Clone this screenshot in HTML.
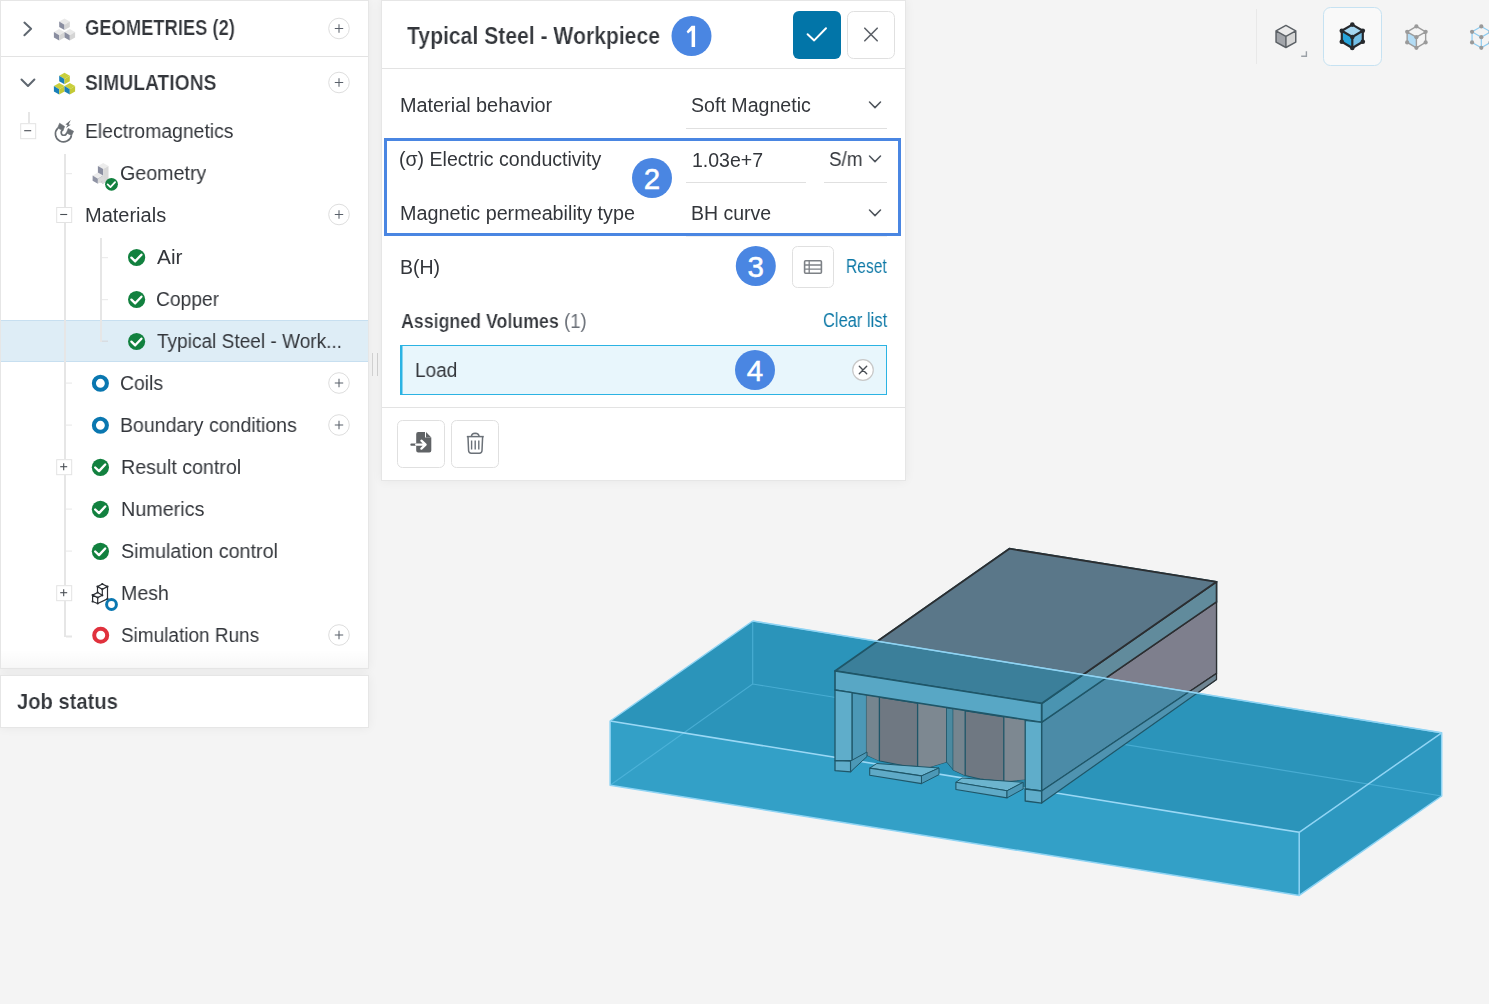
<!DOCTYPE html>
<html><head><meta charset="utf-8"><style>
*{margin:0;padding:0;box-sizing:border-box}
html,body{width:1489px;height:1004px;overflow:hidden;background:#f4f4f4;font-family:"Liberation Sans", sans-serif}
.a{position:absolute}
.t{position:absolute;white-space:nowrap;line-height:1;transform-origin:0 0;will-change:transform}
</style></head>
<body>
<div class="a" style="left:0;top:0;width:369px;height:669px;background:#fff;border:1px solid #e6e6e6;box-shadow:0 0 10px rgba(0,0,0,0.055)"></div>
<div class="a" style="left:1px;top:56px;width:367px;height:1px;background:#e3e3e3"></div>
<div class="a" style="left:1px;top:650px;width:367px;height:18px;background:linear-gradient(rgba(0,0,0,0),rgba(0,0,0,0.03))"></div>
<div class="a" style="left:1px;top:320px;width:367px;height:42px;background:#deedf6;border-top:1px solid #c7dff0;border-bottom:1px solid #c7dff0"></div>
<div class="a" style="left:0;top:675px;width:369px;height:53px;background:#fff;border:1px solid #e6e6e6;box-shadow:0 0 10px rgba(0,0,0,0.055)"></div>
<div class="a" style="left:372px;top:353px;width:1px;height:23px;background:#d0d0d0"></div>
<div class="a" style="left:377px;top:353px;width:1px;height:23px;background:#d0d0d0"></div>
<div class="a" style="left:381px;top:0;width:525px;height:481px;background:#fff;border:1px solid #e6e6e6;box-shadow:0 0 10px rgba(0,0,0,0.055)"></div>
<div class="a" style="left:382px;top:68px;width:523px;height:1px;background:#e3e3e3"></div>
<div class="a" style="left:382px;top:407px;width:523px;height:1px;background:#e3e3e3"></div>
<svg class="a" style="left:0;top:0" width="1489" height="1004" viewBox="0 0 1489 1004"><polyline points="24.4,22.6 31.1,28.8 24.4,35.2" fill="none" stroke="#5f6770" stroke-width="2" stroke-linecap="round" stroke-linejoin="round"/><polyline points="21.5,79.5 28,86 34.4,79.5" fill="none" stroke="#5f6770" stroke-width="2" stroke-linecap="round" stroke-linejoin="round"/><polygon points="64.50,18.50 69.80,21.57 64.50,24.65 59.20,21.57" fill="#e9e9e9"/><polygon points="59.20,21.57 64.50,24.65 64.50,30.00 59.20,26.93" fill="#8a8ea0"/><polygon points="64.50,24.65 69.80,21.57 69.80,26.93 64.50,30.00" fill="#d5d5d5"/><polygon points="59.20,29.00 64.50,32.07 59.20,35.15 53.90,32.07" fill="#e9e9e9"/><polygon points="53.90,32.07 59.20,35.15 59.20,40.50 53.90,37.43" fill="#8a8ea0"/><polygon points="59.20,35.15 64.50,32.07 64.50,37.43 59.20,40.50" fill="#d5d5d5"/><polygon points="69.80,29.00 75.10,32.07 69.80,35.15 64.50,32.07" fill="#e9e9e9"/><polygon points="64.50,32.07 69.80,35.15 69.80,40.50 64.50,37.43" fill="#8a8ea0"/><polygon points="69.80,35.15 75.10,32.07 75.10,37.43 69.80,40.50" fill="#d5d5d5"/><polygon points="64.50,72.80 69.80,75.87 64.50,78.95 59.20,75.87" fill="#c9cf3c"/><polygon points="59.20,75.87 64.50,78.95 64.50,84.30 59.20,81.23" fill="#1a80b8"/><polygon points="64.50,78.95 69.80,75.87 69.80,81.23 64.50,84.30" fill="#c3c935"/><polygon points="59.20,83.00 64.50,86.07 59.20,89.15 53.90,86.07" fill="#c9cf3c"/><polygon points="53.90,86.07 59.20,89.15 59.20,94.50 53.90,91.43" fill="#1a80b8"/><polygon points="59.20,89.15 64.50,86.07 64.50,91.43 59.20,94.50" fill="#c3c935"/><polygon points="69.80,83.00 75.10,86.07 69.80,89.15 64.50,86.07" fill="#c9cf3c"/><polygon points="64.50,86.07 69.80,89.15 69.80,94.50 64.50,91.43" fill="#1a80b8"/><polygon points="69.80,89.15 75.10,86.07 75.10,91.43 69.80,94.50" fill="#c3c935"/><circle cx="339" cy="28.5" r="10.3" fill="#fff" stroke="#dedede" stroke-width="1"/><path d="M334.8 28.5H343.2M339 24.3V32.7" stroke="#59606a" stroke-width="1.05"/><circle cx="339" cy="82.5" r="10.3" fill="#fff" stroke="#dedede" stroke-width="1"/><path d="M334.8 82.5H343.2M339 78.3V86.7" stroke="#59606a" stroke-width="1.05"/><circle cx="339" cy="214.5" r="10.3" fill="#fff" stroke="#dedede" stroke-width="1"/><path d="M334.8 214.5H343.2M339 210.3V218.7" stroke="#59606a" stroke-width="1.05"/><circle cx="339" cy="383" r="10.3" fill="#fff" stroke="#dedede" stroke-width="1"/><path d="M334.8 383H343.2M339 378.8V387.2" stroke="#59606a" stroke-width="1.05"/><circle cx="339" cy="425" r="10.3" fill="#fff" stroke="#dedede" stroke-width="1"/><path d="M334.8 425H343.2M339 420.8V429.2" stroke="#59606a" stroke-width="1.05"/><circle cx="339" cy="635" r="10.3" fill="#fff" stroke="#dedede" stroke-width="1"/><path d="M334.8 635H343.2M339 630.8V639.2" stroke="#59606a" stroke-width="1.05"/><rect x="28" y="112" width="2" height="11" fill="#e6e6e6"/><rect x="64" y="154" width="2" height="53" fill="#e6e6e6"/><rect x="64" y="222" width="2" height="237" fill="#e6e6e6"/><rect x="64" y="475" width="2" height="110" fill="#e6e6e6"/><rect x="64" y="601" width="2" height="36" fill="#e6e6e6"/><rect x="100" y="238" width="2" height="104" fill="#e6e6e6"/><rect x="66" y="173.0" width="6" height="1.2" fill="#ececec"/><rect x="66" y="382.5" width="6" height="1.2" fill="#ececec"/><rect x="66" y="424.5" width="6" height="1.2" fill="#ececec"/><rect x="66" y="508.5" width="6" height="1.2" fill="#ececec"/><rect x="66" y="550.5" width="6" height="1.2" fill="#ececec"/><rect x="66" y="635.5" width="6" height="2" fill="#e6e6e6"/><rect x="102" y="257.0" width="6" height="1.2" fill="#ececec"/><rect x="102" y="299.0" width="6" height="1.2" fill="#ececec"/><rect x="102" y="340.5" width="6" height="1.5" fill="#d8dde2"/><rect x="20.7" y="123.7" width="15" height="15" fill="#fff" stroke="#e3e3e3" stroke-width="1"/><path d="M24.2 130.7H31.2" stroke="#4a4f55" stroke-width="1.1"/><rect x="56.7" y="207.5" width="15" height="15" fill="#fff" stroke="#e3e3e3" stroke-width="1"/><path d="M60.2 214.5H67.2" stroke="#4a4f55" stroke-width="1.1"/><rect x="56.7" y="459.7" width="15" height="15" fill="#fff" stroke="#e3e3e3" stroke-width="1"/><path d="M60.2 466.7H67.2" stroke="#4a4f55" stroke-width="1.1"/><path d="M63.7 463.2V470.2" stroke="#4a4f55" stroke-width="1.1"/><rect x="56.7" y="585.7" width="15" height="15" fill="#fff" stroke="#e3e3e3" stroke-width="1"/><path d="M60.2 592.7H67.2" stroke="#4a4f55" stroke-width="1.1"/><path d="M63.7 589.2V596.2" stroke="#4a4f55" stroke-width="1.1"/><circle cx="136.6" cy="257.5" r="8.6" fill="#12813f"/><polyline points="131.40,257.70 135.20,261.30 141.40,254.70" fill="none" stroke="#fff" stroke-width="2.40" stroke-linecap="round" stroke-linejoin="round"/><circle cx="136.6" cy="299.5" r="8.6" fill="#12813f"/><polyline points="131.40,299.70 135.20,303.30 141.40,296.70" fill="none" stroke="#fff" stroke-width="2.40" stroke-linecap="round" stroke-linejoin="round"/><circle cx="136.6" cy="341.5" r="8.6" fill="#12813f"/><polyline points="131.40,341.70 135.20,345.30 141.40,338.70" fill="none" stroke="#fff" stroke-width="2.40" stroke-linecap="round" stroke-linejoin="round"/><circle cx="100.4" cy="467.3" r="8.6" fill="#12813f"/><polyline points="95.20,467.50 99.00,471.10 105.20,464.50" fill="none" stroke="#fff" stroke-width="2.40" stroke-linecap="round" stroke-linejoin="round"/><circle cx="100.4" cy="509.3" r="8.6" fill="#12813f"/><polyline points="95.20,509.50 99.00,513.10 105.20,506.50" fill="none" stroke="#fff" stroke-width="2.40" stroke-linecap="round" stroke-linejoin="round"/><circle cx="100.4" cy="551.3" r="8.6" fill="#12813f"/><polyline points="95.20,551.50 99.00,555.10 105.20,548.50" fill="none" stroke="#fff" stroke-width="2.40" stroke-linecap="round" stroke-linejoin="round"/><circle cx="100.4" cy="383.3" r="6.5" fill="none" stroke="#0a77b0" stroke-width="4.1"/><circle cx="100.4" cy="425.3" r="6.5" fill="none" stroke="#0a77b0" stroke-width="4.1"/><circle cx="100.7" cy="635.2" r="6.5" fill="none" stroke="#e0313d" stroke-width="4.0"/><path d="M57.8 128.1 A8.1 8.1 0 1 0 71.5 135.3 M63.1 130 A2.7 2.7 0 1 0 66.6 132.9" fill="none" stroke="#6b7075" stroke-width="1.7"/><polygon points="59.6,123.2 64.6,126.4 63.1,130.4 57.6,128.1" fill="#6b7075" stroke="#6b7075" stroke-width="0.6" stroke-linejoin="round"/><polygon points="68.2,128.4 73.6,131.3 71.6,135.5 66.4,132.9" fill="#6b7075" stroke="#6b7075" stroke-width="0.6" stroke-linejoin="round"/><polygon points="70.8,120.0 65.4,124.6 67.6,125.0 65.9,128.0 70.8,124.8 68.6,124.4" fill="#6b7075"/><polygon points="103.20,162.90 108.50,165.97 103.20,169.05 97.90,165.97" fill="#ececec"/><polygon points="97.90,165.97 103.20,169.05 103.20,183.70 97.90,180.63" fill="#8a8ea0"/><polygon points="103.20,169.05 108.50,165.97 108.50,180.63 103.20,183.70" fill="#d8d8d8"/><polygon points="97.90,172.50 103.20,175.57 97.90,178.65 92.60,175.57" fill="#ececec"/><polygon points="92.60,175.57 97.90,178.65 97.90,183.70 92.60,180.63" fill="#8f93a4"/><polygon points="97.90,178.65 103.20,175.57 103.20,180.63 97.90,183.70" fill="#dadada"/><polygon points="100.2,182.3 103.3,180.4 103.3,183.9" fill="#d8d8d8"/><circle cx="111.5" cy="184.3" r="6.4" fill="#12813f"/><polyline points="107.63,184.45 110.46,187.13 115.07,182.22" fill="none" stroke="#fff" stroke-width="1.79" stroke-linecap="round" stroke-linejoin="round"/><g fill="none" stroke="#2b2e33" stroke-width="1.2" stroke-linejoin="round"><path d="M102.3 584 L107.5 586.6 L102.3 589.2 L97.5 586.6 Z"/><path d="M97.5 586.6 V592.7 M102.3 589.2 V595.3 M107.5 586.6 V598.9 L97.7 603.5"/><path d="M92.6 595.1 L97.7 592.5 L102.3 595.3 L97.7 597.6 Z M92.6 595.1 V601.5 L97.7 603.5 V597.6"/></g><circle cx="102.3" cy="584" r="1.1" fill="#2b2e33"/><circle cx="107.5" cy="586.6" r="1.1" fill="#2b2e33"/><circle cx="102.3" cy="589.2" r="1.1" fill="#2b2e33"/><circle cx="97.5" cy="586.6" r="1.1" fill="#2b2e33"/><circle cx="92.6" cy="595.1" r="1.1" fill="#2b2e33"/><circle cx="97.7" cy="597.6" r="1.1" fill="#2b2e33"/><circle cx="92.6" cy="601.5" r="1.1" fill="#2b2e33"/><circle cx="97.7" cy="603.5" r="1.1" fill="#2b2e33"/><circle cx="107.5" cy="598.9" r="1.1" fill="#2b2e33"/><circle cx="102.3" cy="595.3" r="1.1" fill="#2b2e33"/><circle cx="97.7" cy="592.5" r="1.1" fill="#2b2e33"/><circle cx="111.5" cy="604.5" r="4.9" fill="none" stroke="#0a77b0" stroke-width="3.0"/><rect x="793" y="11" width="48" height="48" rx="6" fill="#0275a8"/><polyline points="807.6,34.2 814.2,40.4 826,28.2" fill="none" stroke="#fff" stroke-width="2" stroke-linecap="round" stroke-linejoin="round"/><rect x="847.5" y="11.5" width="47" height="47" rx="6" fill="#fff" stroke="#e0e0e0" stroke-width="1"/><path d="M864.8 28.2 L877.2 40.8 M877.2 28.2 L864.8 40.8" stroke="#5c6168" stroke-width="1.6" stroke-linecap="round"/><rect x="686" y="128" width="201" height="1" fill="#e0e0e0"/><rect x="686" y="182" width="120" height="1" fill="#e0e0e0"/><rect x="824" y="182" width="63" height="1" fill="#e0e0e0"/><rect x="686" y="235.5" width="201" height="1" fill="#e0e0e0"/><polyline points="869.5,102.0 875,107.6 880.5,102.0" fill="none" stroke="#4f555c" stroke-width="1.5" stroke-linecap="round" stroke-linejoin="round"/><polyline points="869.5,156.0 875,161.60000000000002 880.5,156.0" fill="none" stroke="#4f555c" stroke-width="1.5" stroke-linecap="round" stroke-linejoin="round"/><polyline points="869.5,210.0 875,215.60000000000002 880.5,210.0" fill="none" stroke="#4f555c" stroke-width="1.5" stroke-linecap="round" stroke-linejoin="round"/><rect x="385.5" y="139.5" width="514" height="95" fill="none" stroke="#4a86e2" stroke-width="3"/><rect x="792.5" y="246.5" width="41" height="41" rx="5" fill="#fff" stroke="#e0e0e0" stroke-width="1"/><rect x="804.6" y="260.8" width="16.8" height="12.4" rx="1" fill="none" stroke="#7d8186" stroke-width="1.6"/><path d="M804.6 265 H821.4 M804.6 269.1 H821.4 M809.2 260.8 V273.2" stroke="#7d8186" stroke-width="1.3"/><rect x="400.5" y="345.5" width="486" height="49" fill="#e8f6fc" stroke="#2bb3e3" stroke-width="1"/><rect x="400" y="345" width="2.5" height="50" fill="#2bb3e3"/><circle cx="863" cy="370" r="10.3" fill="#fff" stroke="#c8c8c8" stroke-width="1.2"/><path d="M859.3 366.3 L866.7 373.7 M866.7 366.3 L859.3 373.7" stroke="#4a4f55" stroke-width="1.4" stroke-linecap="round"/><rect x="397.5" y="420.5" width="47" height="47" rx="5" fill="#fff" stroke="#e0e0e0" stroke-width="1"/><rect x="451.5" y="420.5" width="47" height="47" rx="5" fill="#fff" stroke="#e0e0e0" stroke-width="1"/><path d="M418.2 432.1 H425.0 V437.6 H431.3 V450.6 Q431.3 452.6 429.3 452.6 H418.2 Q416.2 452.6 416.2 450.6 V434.1 Q416.2 432.1 418.2 432.1 Z" fill="#606366"/><path d="M426.0 432.1 L431.3 437.4 H426.0 Z" fill="#606366"/><path d="M411.4 444.7 H416.4" stroke="#606366" stroke-width="2.2" stroke-linecap="round"/><path d="M416.2 444.7 H425.2 M421.4 440.7 L425.6 444.7 L421.4 448.6" fill="none" stroke="#fff" stroke-width="2.3" stroke-linecap="round" stroke-linejoin="round"/><path d="M466.8 436.6 H483.8" stroke="#6b7178" stroke-width="1.5"/><path d="M471.4 436.4 Q471.6 433.4 475.2 433.3 Q478.8 433.4 479.1 436.4" fill="none" stroke="#6b7178" stroke-width="1.5"/><path d="M468 437 L468.6 450.8 Q468.8 453.2 471.2 453.2 H479.4 Q481.8 453.2 482 450.8 L482.6 437" fill="none" stroke="#6b7178" stroke-width="1.5"/><path d="M471.6 440.4 V449.4 M475.2 440.4 V449.4 M478.8 440.4 V449.4" stroke="#6b7178" stroke-width="1.4"/><circle cx="691.5" cy="36" r="20" fill="#4a86e2"/><polygon points="691.6,25.8 695.1,25.8 695.1,47 691.6,47 691.6,30.6 688.0,33.6 686.6,31.4" fill="#fff"/><circle cx="652" cy="178" r="20" fill="#4a86e2"/><text x="652" y="188.6" text-anchor="middle" style="font-family:&quot;Liberation Sans&quot;,sans-serif" font-size="29.5" fill="#fff" stroke="#fff" stroke-width="0.5">2</text><circle cx="755.8" cy="266" r="20" fill="#4a86e2"/><text x="755.8" y="276.6" text-anchor="middle" style="font-family:&quot;Liberation Sans&quot;,sans-serif" font-size="29.5" fill="#fff" stroke="#fff" stroke-width="0.5">3</text><circle cx="755" cy="370" r="20" fill="#4a86e2"/><text x="755" y="380.6" text-anchor="middle" style="font-family:&quot;Liberation Sans&quot;,sans-serif" font-size="29.5" fill="#fff" stroke="#fff" stroke-width="0.5">4</text><rect x="1256" y="9" width="1" height="55" fill="#e8e8e8"/><polygon points="1285.90,25.40 1295.75,30.85 1285.90,36.30 1276.05,30.85" fill="#ebebeb"/><polygon points="1276.05,30.85 1285.90,36.30 1285.90,47.50 1276.05,42.05" fill="#a2a5aa"/><polygon points="1285.90,36.30 1295.75,30.85 1295.75,42.05 1285.90,47.50" fill="#d6d6d6"/><path d="M1285.90,25.40 L1295.75,30.85 L1295.75,42.05 L1285.90,47.50 L1276.05,42.05 L1276.05,30.85 Z M1276.05,30.85 L1285.90,36.30 L1295.75,30.85 M1285.90,36.30 L1285.90,47.50" fill="none" stroke="#5c6166" stroke-width="1.5" stroke-linejoin="round"/><path d="M1301.2 56.2 H1306.4 V51.2" fill="none" stroke="#9aa0a6" stroke-width="1.4"/><rect x="1323.5" y="7.5" width="58" height="58" rx="7" fill="#f9f9f9" stroke="#c6e2f2" stroke-width="1"/><polygon points="1352.30,24.60 1362.80,30.80 1352.30,37.00 1341.80,30.80" fill="#a5d6f0"/><polygon points="1341.80,30.80 1352.30,37.00 1352.30,48.00 1341.80,41.80" fill="#27a5dc"/><polygon points="1352.30,37.00 1362.80,30.80 1362.80,41.80 1352.30,48.00" fill="#74bfe6"/><path d="M1352.30,24.60 L1362.80,30.80 L1362.80,41.80 L1352.30,48.00 L1341.80,41.80 L1341.80,30.80 Z M1341.80,30.80 L1352.30,37.00 L1362.80,30.80 M1352.30,37.00 L1352.30,48.00" fill="none" stroke="#26292d" stroke-width="2.2" stroke-linejoin="round"/><circle cx="1352.30" cy="24.60" r="2.3" fill="#26292d"/><circle cx="1362.80" cy="30.80" r="2.3" fill="#26292d"/><circle cx="1352.30" cy="37.00" r="2.3" fill="#26292d"/><circle cx="1341.80" cy="30.80" r="2.3" fill="#26292d"/><circle cx="1341.80" cy="41.80" r="2.3" fill="#26292d"/><circle cx="1352.30" cy="48.00" r="2.3" fill="#26292d"/><circle cx="1362.80" cy="41.80" r="2.3" fill="#26292d"/><polygon points="1407.15,31.80 1416.40,37.20 1416.40,47.80 1407.15,42.40" fill="#b3dcf5"/><path d="M1416.40,26.40 L1425.65,31.80 L1425.65,42.40 L1416.40,47.80 L1407.15,42.40 L1407.15,31.80 Z M1407.15,31.80 L1416.40,37.20 L1425.65,31.80 M1416.40,37.20 L1416.40,47.80" fill="none" stroke="#9c9c9c" stroke-width="1.4" stroke-linejoin="round"/><circle cx="1416.40" cy="26.40" r="2.1" fill="#9a9a9a"/><circle cx="1425.65" cy="31.80" r="2.1" fill="#9a9a9a"/><circle cx="1416.40" cy="37.20" r="2.1" fill="#9a9a9a"/><circle cx="1407.15" cy="31.80" r="2.1" fill="#9a9a9a"/><circle cx="1407.15" cy="42.40" r="2.1" fill="#9a9a9a"/><circle cx="1416.40" cy="47.80" r="2.1" fill="#9a9a9a"/><circle cx="1425.65" cy="42.40" r="2.1" fill="#9a9a9a"/><path d="M1481.30,26.40 L1490.55,31.80 L1490.55,42.40 L1481.30,47.80 L1472.05,42.40 L1472.05,31.80 Z M1472.05,31.80 L1481.30,37.20 L1490.55,31.80 M1481.30,37.20 L1481.30,47.80" fill="none" stroke="#8ccbf0" stroke-width="1.2" stroke-linejoin="round"/><circle cx="1481.30" cy="26.40" r="2.1" fill="#9a9a9a"/><circle cx="1490.55" cy="31.80" r="2.1" fill="#9a9a9a"/><circle cx="1481.30" cy="37.20" r="2.1" fill="#9a9a9a"/><circle cx="1472.05" cy="31.80" r="2.1" fill="#9a9a9a"/><circle cx="1472.05" cy="42.40" r="2.1" fill="#9a9a9a"/><circle cx="1481.30" cy="47.80" r="2.1" fill="#9a9a9a"/><circle cx="1490.55" cy="42.40" r="2.1" fill="#9a9a9a"/><defs><clipPath id="above"><polygon points="560,480 1489,480 1489,740.5 700,612.4 560,590"/></clipPath></defs><polygon points="752.7,621.0 1441.7,732.8 1299.2,832.3 610.1,721.0" fill="#2b94ba"/><polygon points="610.1,721.0 1299.2,832.3 1299.2,895.4 610.1,785.2" fill="#33a0c7"/><polygon points="1299.2,832.3 1441.7,732.8 1441.7,796.0 1299.2,895.4" fill="#2d98c0"/><path d="M752.7 621V684L610.1 785.2M752.7 684L1441.7 796" fill="none" stroke="#5bbde3" stroke-width="1.2" opacity="0.6"/><path d="M610.1 721 L1299.2 832.3" stroke="#9ad8f5" stroke-width="1.6"/><polygon points="1041.6,722.3 1216.5,601.9 1216.5,673.4 1041.6,791.0" fill="#4b8ba7" stroke="#1f5668" stroke-width="1.3" stroke-linejoin="round"/><polygon points="1041.6,791.0 1216.5,673.4 1216.5,679.6 1041.6,803.0" fill="#4f93b0" stroke="#1f5668" stroke-width="1.2" stroke-linejoin="round"/><polygon points="1041.6,703.5 1216.5,581.8 1216.5,601.9 1041.6,722.3" fill="#4a94b1" stroke="#1f5668" stroke-width="1.6" stroke-linejoin="round"/><polygon points="835.0,671.0 1009.4,548.7 1216.5,581.8 1041.6,703.5" fill="#3b7f9a" stroke="#1f5668" stroke-width="1.8" stroke-linejoin="round"/><polygon points="852.0,692.5 867.0,695.0 867.0,753.0 850.6,771.8 852.0,760.0" fill="#4c98b6" stroke="#1f5668" stroke-width="1" stroke-linejoin="round"/><polygon points="866.5,695.3 946.5,707.8 946.5,762.0 930.0,767.0 905.0,766.0 880.0,761.0 866.5,755.0" fill="#6f7882" stroke="#1f5668" stroke-width="1.1" stroke-linejoin="round"/><polygon points="866.5,695.3 879.4,697.3 879.4,761.0 866.5,755.0" fill="#75858f"/><polygon points="917.6,703.0 946.5,707.8 946.5,762.0 930.0,767.0 917.6,767.0" fill="#7d8891"/><path d="M879.4 697.3V761 M917.6 703V767" stroke="#1f5668" stroke-width="1.3"/><polygon points="946.5,707.8 953.3,708.9 953.3,770.0 946.5,762.0" fill="#4b8aa0" stroke="#1f5668" stroke-width="0.8" stroke-linejoin="round"/><polygon points="953.3,708.9 1025.2,720.2 1025.2,779.5 1003.8,781.5 980.0,779.0 965.2,775.5 953.3,770.0" fill="#6f7882" stroke="#1f5668" stroke-width="1.1" stroke-linejoin="round"/><polygon points="953.3,708.9 965.2,710.8 965.2,775.5 953.3,770.0" fill="#75858f"/><polygon points="1003.8,716.9 1025.2,720.2 1025.2,779.5 1003.8,781.5" fill="#7d8891"/><path d="M965.2 710.8V775.5 M1003.8 716.9V781.5" stroke="#1f5668" stroke-width="1.3"/><polygon points="869.7,768.1 876.8,763.5 939.0,768.0 921.5,775.9" fill="#6cb4ce" stroke="#1f5668" stroke-width="1" stroke-linejoin="round"/><polygon points="869.7,768.1 921.5,775.9 921.5,783.6 869.7,775.2" fill="#5faac7" stroke="#1f5668" stroke-width="1.1" stroke-linejoin="round"/><polygon points="921.5,775.9 939.0,768.0 939.0,774.6 921.5,783.6" fill="#4c98b6" stroke="#1f5668" stroke-width="1" stroke-linejoin="round"/><polygon points="955.9,782.3 962.0,778.0 1023.2,782.3 1007.0,790.8" fill="#6cb4ce" stroke="#1f5668" stroke-width="1" stroke-linejoin="round"/><polygon points="955.9,782.3 1007.0,790.8 1007.0,797.9 955.9,789.5" fill="#5faac7" stroke="#1f5668" stroke-width="1.1" stroke-linejoin="round"/><polygon points="1007.0,790.8 1023.2,782.3 1023.2,789.0 1007.0,797.9" fill="#4c98b6" stroke="#1f5668" stroke-width="1" stroke-linejoin="round"/><polygon points="835.0,671.0 1041.6,703.5 1041.6,722.3 835.0,690.0" fill="#58a7c5" stroke="#1f5668" stroke-width="1.6" stroke-linejoin="round"/><polygon points="835.0,690.0 852.0,692.6 852.0,760.6 835.0,760.6" fill="#5fadca" stroke="#1f5668" stroke-width="1.3" stroke-linejoin="round"/><polygon points="835.0,760.6 850.6,761.0 850.6,771.8 835.0,770.6" fill="#5fadca" stroke="#1f5668" stroke-width="1.3" stroke-linejoin="round"/><polygon points="850.6,761.0 867.0,752.0 867.0,756.5 850.6,771.8" fill="#4c98b6" stroke="#1f5668" stroke-width="1" stroke-linejoin="round"/><polygon points="1025.2,720.3 1041.6,722.3 1041.6,791.0 1025.2,789.0" fill="#5fadca" stroke="#1f5668" stroke-width="1.3" stroke-linejoin="round"/><polygon points="1025.2,789.0 1041.6,791.0 1041.6,803.2 1025.2,801.0" fill="#5fadca" stroke="#1f5668" stroke-width="1.3" stroke-linejoin="round"/><g clip-path="url(#above)"><polygon points="1041.6,722.3 1216.5,601.9 1216.5,673.4 1041.6,791.0" fill="#7e7f8d" stroke="#2b2e31" stroke-width="1.3" stroke-linejoin="round"/><polygon points="1041.6,791.0 1216.5,673.4 1216.5,679.6 1041.6,803.0" fill="#6f8593" stroke="#2b2e31" stroke-width="1.2" stroke-linejoin="round"/><polygon points="1041.6,703.5 1216.5,581.8 1216.5,601.9 1041.6,722.3" fill="#618b9c" stroke="#2b2e31" stroke-width="1.6" stroke-linejoin="round"/><polygon points="835.0,671.0 1009.4,548.7 1216.5,581.8 1041.6,703.5" fill="#5a7789" stroke="#2b2e31" stroke-width="1.8" stroke-linejoin="round"/><polygon points="852.0,692.5 867.0,695.0 867.0,753.0 850.6,771.8 852.0,760.0" fill="#4c98b6" stroke="#2b2e31" stroke-width="1" stroke-linejoin="round"/><polygon points="866.5,695.3 946.5,707.8 946.5,762.0 930.0,767.0 905.0,766.0 880.0,761.0 866.5,755.0" fill="#6f7882" stroke="#2b2e31" stroke-width="1.1" stroke-linejoin="round"/><polygon points="866.5,695.3 879.4,697.3 879.4,761.0 866.5,755.0" fill="#75858f"/><polygon points="917.6,703.0 946.5,707.8 946.5,762.0 930.0,767.0 917.6,767.0" fill="#7d8891"/><path d="M879.4 697.3V761 M917.6 703V767" stroke="#2b2e31" stroke-width="1.3"/><polygon points="946.5,707.8 953.3,708.9 953.3,770.0 946.5,762.0" fill="#4b8aa0" stroke="#2b2e31" stroke-width="0.8" stroke-linejoin="round"/><polygon points="953.3,708.9 1025.2,720.2 1025.2,779.5 1003.8,781.5 980.0,779.0 965.2,775.5 953.3,770.0" fill="#6f7882" stroke="#2b2e31" stroke-width="1.1" stroke-linejoin="round"/><polygon points="953.3,708.9 965.2,710.8 965.2,775.5 953.3,770.0" fill="#75858f"/><polygon points="1003.8,716.9 1025.2,720.2 1025.2,779.5 1003.8,781.5" fill="#7d8891"/><path d="M965.2 710.8V775.5 M1003.8 716.9V781.5" stroke="#2b2e31" stroke-width="1.3"/><polygon points="869.7,768.1 876.8,763.5 939.0,768.0 921.5,775.9" fill="#6cb4ce" stroke="#2b2e31" stroke-width="1" stroke-linejoin="round"/><polygon points="869.7,768.1 921.5,775.9 921.5,783.6 869.7,775.2" fill="#5faac7" stroke="#2b2e31" stroke-width="1.1" stroke-linejoin="round"/><polygon points="921.5,775.9 939.0,768.0 939.0,774.6 921.5,783.6" fill="#4c98b6" stroke="#2b2e31" stroke-width="1" stroke-linejoin="round"/><polygon points="955.9,782.3 962.0,778.0 1023.2,782.3 1007.0,790.8" fill="#6cb4ce" stroke="#2b2e31" stroke-width="1" stroke-linejoin="round"/><polygon points="955.9,782.3 1007.0,790.8 1007.0,797.9 955.9,789.5" fill="#5faac7" stroke="#2b2e31" stroke-width="1.1" stroke-linejoin="round"/><polygon points="1007.0,790.8 1023.2,782.3 1023.2,789.0 1007.0,797.9" fill="#4c98b6" stroke="#2b2e31" stroke-width="1" stroke-linejoin="round"/><polygon points="835.0,671.0 1041.6,703.5 1041.6,722.3 835.0,690.0" fill="#58a7c5" stroke="#2b2e31" stroke-width="1.6" stroke-linejoin="round"/><polygon points="835.0,690.0 852.0,692.6 852.0,760.6 835.0,760.6" fill="#5fadca" stroke="#2b2e31" stroke-width="1.3" stroke-linejoin="round"/><polygon points="835.0,760.6 850.6,761.0 850.6,771.8 835.0,770.6" fill="#5fadca" stroke="#2b2e31" stroke-width="1.3" stroke-linejoin="round"/><polygon points="850.6,761.0 867.0,752.0 867.0,756.5 850.6,771.8" fill="#4c98b6" stroke="#2b2e31" stroke-width="1" stroke-linejoin="round"/><polygon points="1025.2,720.3 1041.6,722.3 1041.6,791.0 1025.2,789.0" fill="#5fadca" stroke="#2b2e31" stroke-width="1.3" stroke-linejoin="round"/><polygon points="1025.2,789.0 1041.6,791.0 1041.6,803.2 1025.2,801.0" fill="#5fadca" stroke="#2b2e31" stroke-width="1.3" stroke-linejoin="round"/></g><path d="M752.7 621 L1441.7 732.8" stroke="#9ed8f2" stroke-width="1.2" opacity="0.8"/><path d="M752.7 621 L1441.7 732.8 V796 L1299.2 895.4 L610.1 785.2 V721 L752.7 621 M1299.2 832.3 L1441.7 732.8 M1299.2 832.3 V895.4" fill="none" stroke="#8fd4f4" stroke-width="1.5" stroke-linejoin="round"/></svg>
<div class="t" id="t0" style="left:84.88px;top:18.30px;font-size:21.5px;font-weight:700;color:#33363b;transform:scaleX(0.8534);-webkit-text-stroke:0.22px #fff">GEOMETRIES (2)</div>
<div class="t" id="t1" style="left:84.85px;top:72.60px;font-size:21.5px;font-weight:700;color:#33363b;transform:scaleX(0.8966);-webkit-text-stroke:0.22px #fff">SIMULATIONS</div>
<div class="t" id="t2" style="left:84.64px;top:121.07px;font-size:20px;font-weight:400;color:#33363b;transform:scaleX(0.9671)">Electromagnetics</div>
<div class="t" id="t3" style="left:120.41px;top:163.07px;font-size:20px;font-weight:400;color:#33363b;transform:scaleX(0.9828)">Geometry</div>
<div class="t" id="t4" style="left:84.60px;top:205.07px;font-size:20px;font-weight:400;color:#33363b;transform:scaleX(1.0000)">Materials</div>
<div class="t" id="t5" style="left:156.98px;top:247.07px;font-size:20px;font-weight:400;color:#33363b;transform:scaleX(1.0417)">Air</div>
<div class="t" id="t6" style="left:156.06px;top:289.07px;font-size:20px;font-weight:400;color:#33363b;transform:scaleX(0.9615)">Copper</div>
<div class="t" id="t7" style="left:157.02px;top:331.07px;font-size:20px;font-weight:400;color:#33363b;transform:scaleX(0.9531)">Typical Steel - Work...</div>
<div class="t" id="t8" style="left:120.43px;top:373.07px;font-size:20px;font-weight:400;color:#33363b;transform:scaleX(0.9674)">Coils</div>
<div class="t" id="t9" style="left:120.42px;top:415.07px;font-size:20px;font-weight:400;color:#33363b;transform:scaleX(0.9756)">Boundary conditions</div>
<div class="t" id="t10" style="left:120.61px;top:457.07px;font-size:20px;font-weight:400;color:#33363b;transform:scaleX(0.9833)">Result control</div>
<div class="t" id="t11" style="left:120.61px;top:499.07px;font-size:20px;font-weight:400;color:#33363b;transform:scaleX(0.9880)">Numerics</div>
<div class="t" id="t12" style="left:120.61px;top:541.07px;font-size:20px;font-weight:400;color:#33363b;transform:scaleX(0.9873)">Simulation control</div>
<div class="t" id="t13" style="left:120.61px;top:583.07px;font-size:20px;font-weight:400;color:#33363b;transform:scaleX(0.9787)">Mesh</div>
<div class="t" id="t14" style="left:120.63px;top:625.07px;font-size:20px;font-weight:400;color:#33363b;transform:scaleX(0.9479)">Simulation Runs</div>
<div class="t" id="t15" style="left:16.75px;top:690.95px;font-size:22.5px;font-weight:700;color:#33363b;transform:scaleX(0.8964);-webkit-text-stroke:0.22px #fff">Job status</div>
<div class="t" id="t16" style="left:406.80px;top:24.53px;font-size:23px;font-weight:700;color:#33363b;transform:scaleX(0.9189);-webkit-text-stroke:0.22px #fff">Typical Steel - Workpiece</div>
<div class="t" id="t17" style="left:399.78px;top:96.29px;font-size:19.5px;font-weight:400;color:#33363b;transform:scaleX(1.0176)">Material behavior</div>
<div class="t" id="t18" style="left:691.19px;top:96.29px;font-size:19.5px;font-weight:400;color:#33363b;transform:scaleX(1.0051)">Soft Magnetic</div>
<div class="t" id="t19" style="left:399.00px;top:150.29px;font-size:19.5px;font-weight:400;color:#33363b;transform:scaleX(1.0025)">(σ) Electric conductivity</div>
<div class="t" id="t20" style="left:692.20px;top:150.79px;font-size:19.5px;font-weight:400;color:#33363b;transform:scaleX(0.9942)">1.03e+7</div>
<div class="t" id="t21" style="left:829.44px;top:150.29px;font-size:19.5px;font-weight:400;color:#33363b;transform:scaleX(0.9636)">S/m</div>
<div class="t" id="t22" style="left:399.78px;top:204.29px;font-size:19.5px;font-weight:400;color:#33363b;transform:scaleX(1.0130)">Magnetic permeability type</div>
<div class="t" id="t23" style="left:691.20px;top:204.29px;font-size:19.5px;font-weight:400;color:#33363b;transform:scaleX(0.9974)">BH curve</div>
<div class="t" id="t24" style="left:399.79px;top:258.29px;font-size:19.5px;font-weight:400;color:#33363b;transform:scaleX(1.0000)">B(H)</div>
<div class="t" id="t25" style="left:845.65px;top:256.79px;font-size:19.5px;font-weight:400;color:#0d78a6;transform:scaleX(0.8000)">Reset</div>
<div class="t" id="t26" style="left:400.76px;top:311.89px;font-size:19.5px;font-weight:700;color:#33363b;transform:scaleX(0.9116);-webkit-text-stroke:0.22px #fff">Assigned Volumes</div>
<div class="t" id="t27" style="left:564.05px;top:311.89px;font-size:19.5px;font-weight:400;color:#6b7078;transform:scaleX(0.9545)">(1)</div>
<div class="t" id="t28" style="left:822.88px;top:311.29px;font-size:19.5px;font-weight:400;color:#0d78a6;transform:scaleX(0.8453)">Clear list</div>
<div class="t" id="t29" style="left:415.02px;top:360.69px;font-size:19.5px;font-weight:400;color:#33363b;transform:scaleX(0.9756)">Load</div>
</body></html>
